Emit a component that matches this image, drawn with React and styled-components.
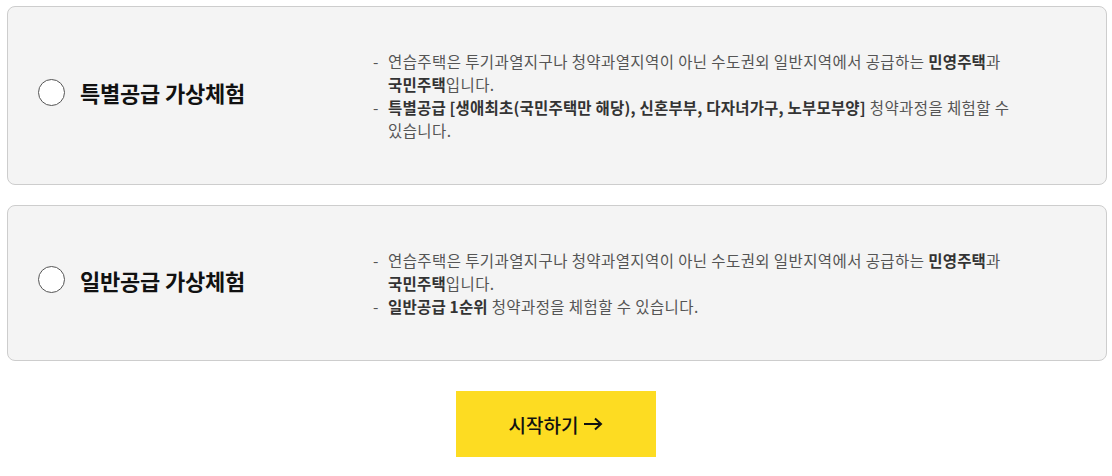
import React from "react";
import styled, { createGlobalStyle } from "styled-components";

const Global = createGlobalStyle`
  html, body { margin: 0; padding: 0; background: #fff; }
  body { font-family: "Noto Sans CJK KR", "Noto Sans", sans-serif; color: #333; }
`;

const Page = styled.div`
  padding: 6px 5px 0 7px;
  display: flex;
  flex-direction: column;
  gap: 20px;
`;

const Card = styled.label`
  display: grid;
  grid-template-columns: 335px 1fr;
  align-items: center;
  background: #f4f4f4;
  border: 1px solid #cdcdcd;
  border-radius: 8px;
  padding: 43px 0 42px 30px;
  cursor: pointer;
`;

const Head = styled.div`
  display: flex;
  align-items: center;
  gap: 15px;
  margin-bottom: 8px;
`;

const Radio = styled.span`
  width: 25px;
  height: 25px;
  border-radius: 50%;
  border: 1px solid #555;
  background: #fff;
  flex: none;
`;

const Title = styled.span`
  font-size: 22px;
  font-weight: 700;
  color: #111;
  letter-spacing: -0.2px;
`;

const List = styled.ul`
  list-style: none;
  margin: 0;
  padding: 0;
  width: 650px;
`;

const Item = styled.li`
  display: flex;
  font-size: 15.5px;
  line-height: 23px;
  color: #555;
  letter-spacing: 0.4px;
  word-break: keep-all;
`;

const Dash = styled.span`
  width: 15px;
  flex: none;
`;

const B = styled.b`
  font-weight: 700;
  color: #333;
  letter-spacing: 0.2px;
`;

const Footer = styled.div`
  display: flex;
  justify-content: center;
  padding-top: 10px;
  padding-right: 2px;
`;

const Start = styled.button`
  width: 200px;
  height: 66px;
  border: none;
  background: #fddc22;
  font-family: inherit;
  font-size: 19px;
  font-weight: 500;
  color: #111;
  display: flex;
  align-items: center;
  justify-content: center;
  gap: 5px;
  cursor: pointer;
`;

const Arrow = () => (
  <svg width="20" height="14" viewBox="0 0 20 14" fill="none" stroke="#111" strokeWidth="2">
    <path d="M1 7h17M12 1.5L18 7l-6 5.5" />
  </svg>
);

const common = (
  <Item>
    <Dash>-</Dash>
    <span>
      연습주택은 투기과열지구나 청약과열지역이 아닌 수도권외 일반지역에서 공급하는 <B>민영주택</B>과{" "}
      <B>국민주택</B>입니다.
    </span>
  </Item>
);

export default function App() {
  return (
    <>
      <Global />
      <Page>
        <Card>
          <Head>
            <Radio />
            <Title>특별공급 가상체험</Title>
          </Head>
          <List>
            {common}
            <Item>
              <Dash>-</Dash>
              <span>
                <B>특별공급 [생애최초(국민주택만 해당), 신혼부부, 다자녀가구, 노부모부양]</B> 청약과정을 체험할 수 있습니다.
              </span>
            </Item>
          </List>
        </Card>
        <Card>
          <Head>
            <Radio />
            <Title>일반공급 가상체험</Title>
          </Head>
          <List>
            {common}
            <Item>
              <Dash>-</Dash>
              <span>
                <B>일반공급 1순위</B> 청약과정을 체험할 수 있습니다.
              </span>
            </Item>
          </List>
        </Card>
        <Footer>
          <Start>
            시작하기 <Arrow />
          </Start>
        </Footer>
      </Page>
    </>
  );
}
